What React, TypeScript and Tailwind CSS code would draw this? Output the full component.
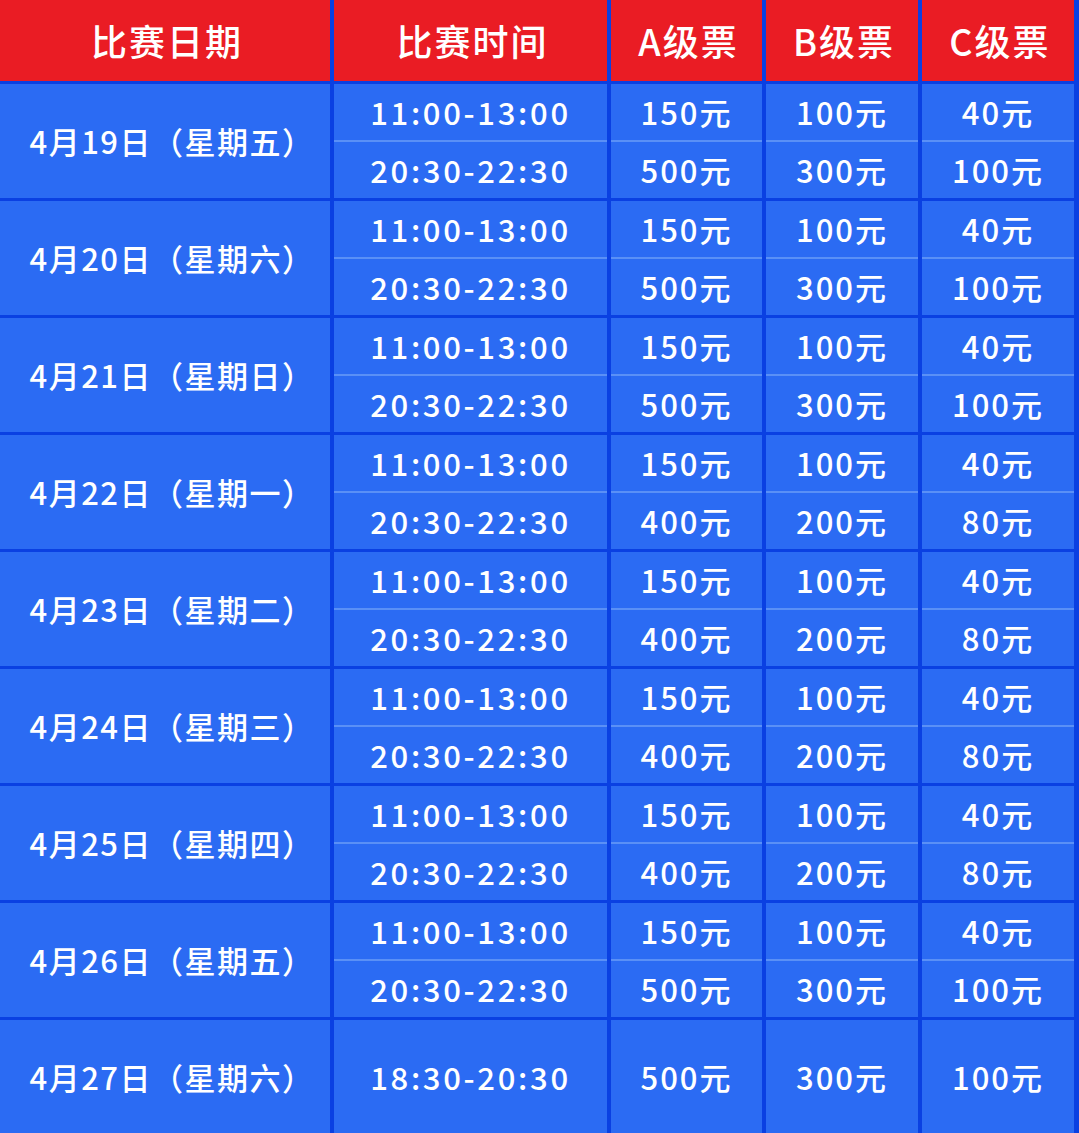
import React from 'react';

type Slot = { time: string; a: string; b: string; c: string };
type Day = { date: string; slots: Slot[] };

const noon = (a: string, b: string, c: string): Slot => ({ time: '11:00-13:00', a, b, c });
const night = (a: string, b: string, c: string): Slot => ({ time: '20:30-22:30', a, b, c });

const days: Day[] = [
  { date: '4月19日（星期五）', slots: [noon('150元', '100元', '40元'), night('500元', '300元', '100元')] },
  { date: '4月20日（星期六）', slots: [noon('150元', '100元', '40元'), night('500元', '300元', '100元')] },
  { date: '4月21日（星期日）', slots: [noon('150元', '100元', '40元'), night('500元', '300元', '100元')] },
  { date: '4月22日（星期一）', slots: [noon('150元', '100元', '40元'), night('400元', '200元', '80元')] },
  { date: '4月23日（星期二）', slots: [noon('150元', '100元', '40元'), night('400元', '200元', '80元')] },
  { date: '4月24日（星期三）', slots: [noon('150元', '100元', '40元'), night('400元', '200元', '80元')] },
  { date: '4月25日（星期四）', slots: [noon('150元', '100元', '40元'), night('400元', '200元', '80元')] },
  { date: '4月26日（星期五）', slots: [noon('150元', '100元', '40元'), night('500元', '300元', '100元')] },
  { date: '4月27日（星期六）', slots: [{ time: '18:30-20:30', a: '500元', b: '300元', c: '100元' }] },
];

const cols = 'grid grid-cols-[330px_273px_151px_152px_152px] gap-x-[4px]';
const font = { fontFamily: '"Noto Sans CJK SC", "Noto Sans", sans-serif' };

// одна колонка группы: значения по слотам, между ними светлая линия
function SlotCell({ values, wide }: { values: string[]; wide?: boolean }) {
  return (
    <div className="flex flex-col bg-[#2b6bf3]">
      {values.map((v, i) => (
        <React.Fragment key={i}>
          {i > 0 && <div className="h-[2px] bg-[#5a90f6]" />}
          <div className={`flex flex-1 items-center justify-center ${wide ? 'tracking-[2.7px]' : 'tracking-[2px]'}`}>
            {v}
          </div>
        </React.Fragment>
      ))}
    </div>
  );
}

export default function App() {
  const headers = ['比赛日期', '比赛时间', 'A级票', 'B级票', 'C级票'];

  return (
    <div
      className="w-[1079px] h-[1133px] overflow-hidden bg-[#0a40e2] text-white font-medium flex flex-col gap-[3px]"
      style={font}
    >
      <div className={`${cols} h-[81px] shrink-0`}>
        {headers.map((h) => (
          <div key={h} className="bg-[#ea1c24] flex items-center justify-center text-[36px] tracking-[2px] pb-[2px] pl-[4px]">
            {h}
          </div>
        ))}
      </div>

      {days.map((d) => (
        <div key={d.date} className={`${cols} h-[114px] shrink-0 text-[31px]`}>
          <div className="bg-[#2b6bf3] flex items-center justify-center tracking-[1.5px] pl-[14px]">{d.date}</div>
          <SlotCell values={d.slots.map((s) => s.time)} wide />
          <SlotCell values={d.slots.map((s) => s.a)} />
          <SlotCell values={d.slots.map((s) => s.b)} />
          <SlotCell values={d.slots.map((s) => s.c)} />
        </div>
      ))}
    </div>
  );
}
